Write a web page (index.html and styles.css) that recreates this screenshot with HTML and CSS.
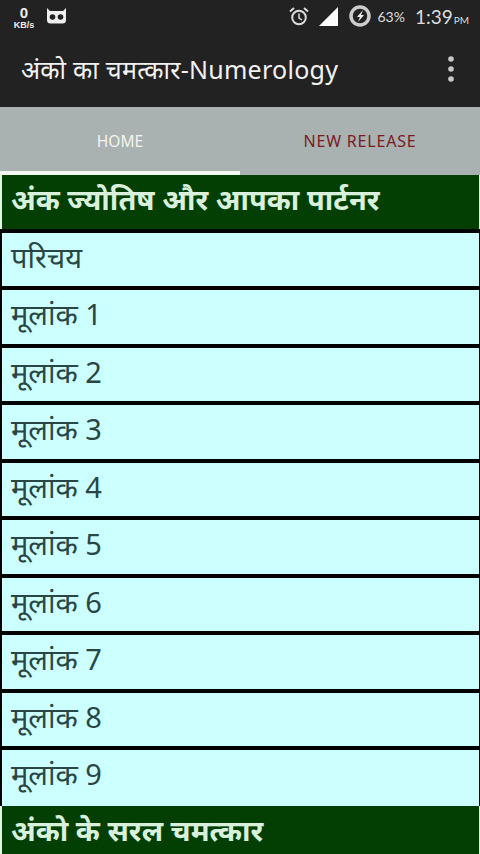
FILE: index.html
```html
<!DOCTYPE html>
<html lang="hi">
<head>
<meta charset="utf-8">
<title>Numerology</title>
<link rel="stylesheet" href="styles.css">
</head>
<body>
<div class="phone">
  <header class="appbar">
    <div class="status">
      <div class="status-left">
        <div class="speed"><span class="speed-num">0</span><span class="speed-unit">KB/s</span></div>
        <svg class="cm" width="21" height="18" viewBox="0 0 21 18"><path d="M1 1l3 3h13l3-3v12a3.500 3.500 0 0 1-3.500 3.500h-12A3.500 3.500 0 0 1 1 13z" fill="#eee"/><circle cx="6.500" cy="10" r="2.800" fill="#222"/><circle cx="14.500" cy="10" r="2.800" fill="#222"/></svg>
      </div>
      <div class="status-right">
        <svg class="ic-alarm" width="20" height="19" viewBox="0 0 20 19"><circle cx="10" cy="10.500" r="6.800" fill="none" stroke="#ddd" stroke-width="2"/><path d="M10 6.500v4.500l3 2" fill="none" stroke="#ddd" stroke-width="1.500"/><path d="M1 4.500l4-3.500M19 4.500l-4-3.500" stroke="#ddd" stroke-width="2"/></svg>
        <svg class="ic-signal" width="19" height="19" viewBox="0 0 19 19"><path d="M19 0v19H0z" fill="#fff"/></svg>
        <svg class="ic-batt" width="22" height="22" viewBox="0 0 22 22"><circle cx="11" cy="11" r="9" fill="none" stroke="#ccc" stroke-width="3.500"/><path d="M14 5l-6 7h3l-2 5 6-7h-3z" fill="#eee"/></svg>
        <span class="pct">63%</span>
        <span class="clock">1:39<small>PM</small></span>
      </div>
    </div>
    <div class="titlebar">
      <h1 class="title">अंको का चमत्कार-Numerology</h1>
      <svg class="more" width="8" height="28" viewBox="0 0 8 28"><circle cx="4" cy="4" r="2.800"/><circle cx="4" cy="14" r="2.800"/><circle cx="4" cy="24" r="2.800"/></svg>
    </div>
  </header>
  <nav class="tabs">
    <div class="tab active">HOME</div>
    <div class="tab new">NEW RELEASE</div>
  </nav>
  <main class="list">
    <div class="row head">अंक ज्योतिष और आपका पार्टनर</div>
    <div class="row">परिचय</div>
    <div class="row">मूलांक 1</div>
    <div class="row">मूलांक 2</div>
    <div class="row">मूलांक 3</div>
    <div class="row">मूलांक 4</div>
    <div class="row">मूलांक 5</div>
    <div class="row">मूलांक 6</div>
    <div class="row">मूलांक 7</div>
    <div class="row">मूलांक 8</div>
    <div class="row last">मूलांक 9</div>
    <div class="row head foot">अंको के सरल चमत्कार</div>
  </main>
</div>
</body>
</html>
```
FILE: styles.css
```css
* { box-sizing: border-box; }
html, body { margin: 0; padding: 0; }
body { width: 480px; height: 854px; overflow: hidden; font-family: "Noto Sans", "Liberation Sans", sans-serif; background: #000; }
.phone { width: 480px; height: 854px; overflow: hidden; display: flex; flex-direction: column; }
.appbar { height: 107px; background: #222222; color: #eee; flex: none; }
.status { height: 36px; display: flex; justify-content: space-between; align-items: center; padding: 0 11px 4px 12px; }
.status-left { display: flex; align-items: center; gap: 10px; }
.speed { display: flex; flex-direction: column; align-items: center; width: 24px; margin-top: 2px; }
.speed-num { font: bold 15px/15px "Liberation Sans", sans-serif; }
.speed-unit { font: bold 9px/10px "Liberation Sans", sans-serif; }
.status-right { display: flex; align-items: center; }
.ic-signal { margin-left: 10px; }
.ic-batt { margin-left: 11px; }
.pct { font: 14px "Lato", sans-serif; color: #ddd; margin-left: 6px; }
.clock { font: 19px "Lato", sans-serif; color: #ddd; margin-left: 10px; }
.clock small { font-size: 10px; margin-left: 1px; }
.titlebar { height: 70px; display: flex; justify-content: space-between; align-items: center; padding: 0 25px 4px 21px; }
.title { margin: 0; font-weight: 400; font-size: 25px; color: #f2f2f2; letter-spacing: .27px; white-space: nowrap; }
.more { fill: #c8c8c8; }
.tabs { height: 68px; flex: none; display: flex; background: #a9b1b1; }
.tab { width: 240px; display: flex; align-items: center; justify-content: center; font-size: 16px; }
.tab.active { color: #f4f4f0; font-size: 15.500px; box-shadow: inset 0 -4px 0 #f5f8ee; }
.tab.new { color: #7c1a24; letter-spacing: .8px; }
.list { flex: 1; display: flex; flex-direction: column; background: #000; overflow: hidden; }
.row { height: 53.550px; flex: none; margin-bottom: 4px; background: #ccffff; color: #2a4644; font-size: 29px; line-height: 48px; padding-left: 9px; white-space: nowrap; border-left: 2px solid #000; border-right: 1px solid #000; }
.row.head { background: #033f03; color: #d8f0dc; font-weight: 700; border-color: #e4f4e4; }
.row.last { margin-bottom: 0; height: 56px; }
.row.foot { margin-bottom: 0; }
```
